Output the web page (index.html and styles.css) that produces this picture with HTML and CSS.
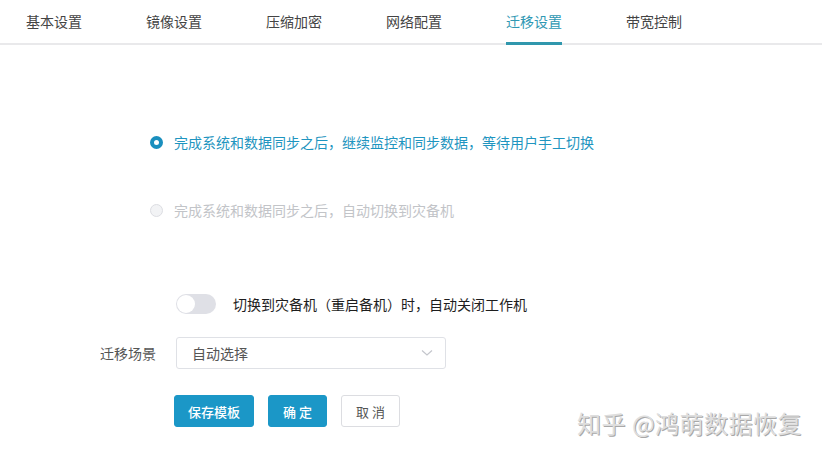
FILE: index.html
```html
<!DOCTYPE html>
<html lang="zh-CN">
<head>
  <meta charset="UTF-8" />
  <title>迁移设置</title>
  <link rel="stylesheet" href="styles.css">
</head>
<body>

  <!-- 顶部选项卡 -->
  <div class="tabs">
    <div class="tab">基本设置</div>
    <div class="tab">镜像设置</div>
    <div class="tab">压缩加密</div>
    <div class="tab">网络配置</div>
    <div class="tab active">迁移设置</div>
    <div class="tab">带宽控制</div>
  </div>

  <div class="content">
    <div class="radios">
      <label class="radio checked"><span class="dot"></span>完成系统和数据同步之后，继续监控和同步数据，等待用户手工切换</label>
      <label class="radio disabled"><span class="dot"></span>完成系统和数据同步之后，自动切换到灾备机</label>
    </div>

    <div class="row switch-row">
      <span class="switch"><span class="knob"></span></span>
      <span class="switch-text">切换到灾备机（重启备机）时，自动关闭工作机</span>
    </div>

    <div class="row field">
      <span class="label">迁移场景</span>
      <div class="select">
        <span>自动选择</span>
        <svg width="12" height="8" viewBox="0 0 12 8"><path d="M1 1.5 L6 6 L11 1.5" fill="none" stroke="#c4c6cc" stroke-width="1.2"/></svg>
      </div>
    </div>

    <div class="row buttons">
      <button class="btn primary">保存模板</button>
      <button class="btn primary narrow">确 定</button>
      <button class="btn plain narrow">取 消</button>
    </div>
  </div>

  <div class="watermark">知乎 @鸿萌数据恢复</div>

</body>
</html>
```

FILE: styles.css
```css
* {
  box-sizing: border-box;
}

body {
  margin: 0;
  font-family: "Noto Sans CJK SC", "Noto Sans", sans-serif;
  font-size: 14px;
  color: #333;
  background: #fff;
  position: relative;
  height: 455px;
  overflow: hidden;
}

.tabs {
  display: flex;
  gap: 64px;
  padding-left: 26px;
  height: 45px;
  border-bottom: 2px solid #e9e9eb;
}

.tab {
  line-height: 42px;
  height: 43px;
  color: #444;
  font-size: 14px;
  position: relative;
}

.tab.active {
  color: #2f98b3;
}

.tab.active::after {
  content: "";
  position: absolute;
  left: 0;
  right: 0;
  bottom: -2px;
  height: 3px;
  background: #3097ad;
}

.content {
  padding-top: 87px;
}

.radios {
  display: flex;
  flex-direction: column;
  gap: 48px;
  padding-left: 150px;
}

.radio {
  display: flex;
  align-items: center;
  gap: 11px;
  height: 20px;
  color: #1f95c0;
}

.radio .dot {
  width: 13px;
  height: 13px;
  border-radius: 50%;
  border: 1px solid #dcdde2;
  background: #f2f3f5;
}

.radio.checked .dot {
  border: 4px solid #1a8fbe;
  background: #fff;
}

.radio.disabled {
  color: #c2c4c8;
}

.row {
  display: flex;
  align-items: center;
}

.switch-row {
  margin-top: 74px;
  padding-left: 176px;
  gap: 17px;
}

.switch {
  width: 40px;
  height: 20px;
  border-radius: 10px;
  background: #dfe0e6;
  padding: 1px;
}

.switch .knob {
  display: block;
  width: 18px;
  height: 18px;
  border-radius: 50%;
  background: #fff;
}

.switch-text {
  color: #1e1e1e;
}

.field {
  margin-top: 23px;
  gap: 20px;
}

.label {
  width: 156px;
  text-align: right;
  color: #555;
}

.select {
  width: 270px;
  height: 32px;
  border: 1px solid #dfe1e6;
  border-radius: 3px;
  display: flex;
  align-items: center;
  justify-content: space-between;
  padding: 0 12px 0 15px;
  color: #555;
}

.buttons {
  margin-top: 26px;
  padding-left: 174px;
  gap: 14px;
}

.btn {
  height: 32px;
  width: 80px;
  border-radius: 3px;
  border: 1px solid #1b97c7;
  background: #1b97c7;
  color: #fff;
  font-family: inherit;
  font-size: 13px;
  font-weight: 500;
  cursor: pointer;
}

.btn.narrow {
  width: 59px;
}

.btn.plain {
  background: #fff;
  border-color: #dcdde1;
  color: #555;
  font-weight: 400;
}

.watermark {
  position: absolute;
  left: 577px;
  top: 405px;
  font-size: 24px;
  color: #dedede;
  letter-spacing: 0.5px;
  text-shadow: 1px 1px 0 #a8a8a8, -1px -1px 0 #fff;
}
```
